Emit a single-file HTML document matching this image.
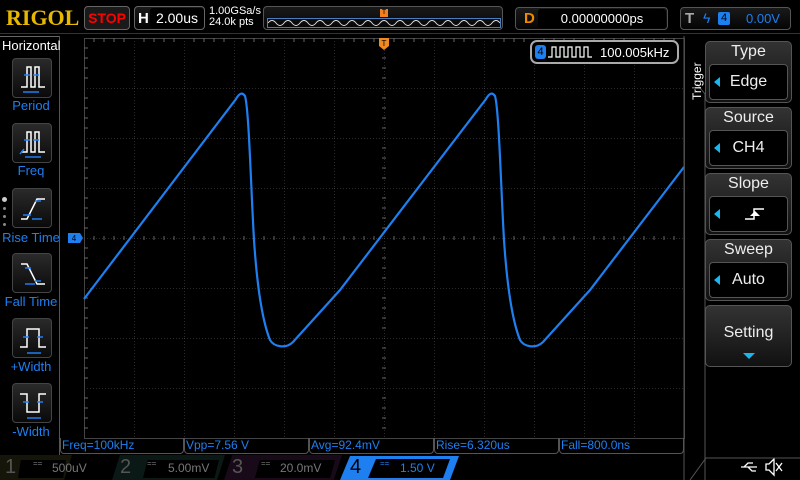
<!DOCTYPE html>
<html><head><meta charset="utf-8"><style>
*{margin:0;padding:0;box-sizing:border-box}
body{width:800px;height:480px;background:#000;overflow:hidden;position:relative;font-family:"Liberation Sans",sans-serif;color:#fff}
.a{position:absolute}
.box{position:absolute;border:1px solid #555;border-radius:4px;background:linear-gradient(#1a1a1a,#050505)}
.btn{position:absolute;left:12px;width:40px;height:40px;border:1px solid #444;border-radius:4px;background:linear-gradient(#2a2a2a,#0a0a0a)}
.lbl{position:absolute;left:0;width:62px;text-align:center;color:#1e7ff0;font-size:13px}
.rh{position:absolute;left:705px;width:87px;height:62px;border:1px solid #555;border-radius:5px;background:linear-gradient(#333,#111)}
.rh .t{text-align:center;font-size:16px;color:#eee;line-height:20px}
.rh .v{position:absolute;left:3px;right:3px;top:22px;height:36px;border:1px solid #555;border-radius:4px;background:#000;text-align:center;line-height:34px;font-size:16px;color:#eee}
.tri{position:absolute;left:4px;top:12px;width:0;height:0;border-top:5px solid transparent;border-bottom:5px solid transparent;border-right:6px solid #1ab6f0}
.m{position:absolute;top:438px;height:16px;border:1px solid #555;border-top:none;border-radius:0 0 4px 4px;color:#1e7ff0;font-size:12px;line-height:15px;padding-left:1px}
.ch{position:absolute;top:456px;height:24px;font-size:12px;line-height:24px}
</style></head><body>
<div class="a" style="left:6px;top:5px;font-family:'Liberation Serif',serif;font-weight:bold;font-size:22px;color:#e8b800">RIGOL</div>
<div class="box" style="left:84px;top:6px;width:46px;height:24px;border-color:#666;background:#1a1a1a;color:#f00;font-weight:bold;font-size:14px;text-align:center;line-height:22px">STOP</div>
<div class="box" style="left:134px;top:6px;width:71px;height:24px;border-color:#666"><span class="a" style="left:3px;top:3px;font-weight:bold;font-size:15px">H</span><div class="a" style="left:15px;top:1px;width:54px;height:20px;background:#000;border-radius:3px;text-align:center;font-size:14px;line-height:20px">2.00us</div></div>
<div class="a" style="left:209px;top:6px;font-size:11px;line-height:11px">1.00GSa/s<br>24.0k pts</div>
<div class="box" style="left:263px;top:6px;width:240px;height:24px"><div class="a" style="left:3px;top:11px;width:234px;height:10px;border:1px solid #4a7cc0"></div>
<svg class="a" style="left:4px;top:12px" width="232" height="8"><path d="M0,4 q4,-5 8,0 t8,0 t8,0 t8,0 t8,0 t8,0 t8,0 t8,0 t8,0 t8,0 t8,0 t8,0 t8,0 t8,0 t8,0 t8,0 t8,0 t8,0 t8,0 t8,0 t8,0 t8,0 t8,0 t8,0 t8,0 t8,0 t8,0 t8,0 t8,0" stroke="#ddd" fill="none"/></svg>
<div class="a" style="left:116px;top:2px;width:8px;height:8px;background:#f08020;font-size:7px;color:#000;text-align:center;line-height:8px">T</div></div>
<div class="box" style="left:515px;top:7px;width:153px;height:23px"><span class="a" style="left:8px;top:2px;color:#f08a00;font-weight:bold;font-size:15px">D</span><div class="a" style="left:22px;top:1px;width:128px;height:19px;background:#000;border-radius:3px;text-align:center;font-size:13px;line-height:19px">0.00000000ps</div></div>
<div class="box" style="left:680px;top:7px;width:111px;height:23px"><span class="a" style="left:4px;top:2px;color:#aaa;font-weight:bold;font-size:15px">T</span><span class="a" style="left:22px;top:2px;color:#1e7ff0;font-size:14px">ϟ</span><div class="a" style="left:37px;top:4px;width:12px;height:13px;background:#1e7ff0;border-radius:2px;color:#000;font-size:11px;text-align:center;line-height:13px">4</div><span class="a" style="left:65px;top:3px;color:#1e7ff0;font-size:13px">0.00V</span></div>
<div class="a" style="left:0;top:33px;width:800px;height:1px;background:#333"></div>
<div class="a" style="left:0;top:36px;width:60px;height:1px;background:#666"></div>
<div class="a" style="left:59px;top:36px;width:1px;height:444px;background:#555"></div>
<div class="a" style="left:2px;top:38px;font-size:13px">Horizontal</div>
<div class="btn" style="top:58px"><svg width="40" height="40"><path d="M8,28H14V8H18V28H22V8H26V28H32" stroke="#fff" fill="none" stroke-width="1.5"/><path d="M11,16h6M20,16h6M10,33h16" stroke="#1e7ff0" stroke-width="1.5"/></svg></div><div class="lbl" style="top:98px">Period</div>
<div class="btn" style="top:123px"><svg width="40" height="40"><path d="M8,28H14V8H18V28H22V8H26V28H32" stroke="#fff" fill="none" stroke-width="1.5"/><path d="M11,16h6M20,16h6M12,33h16M7,30l4,-5" stroke="#1e7ff0" stroke-width="1.5"/></svg></div><div class="lbl" style="top:163px">Freq</div>
<div class="btn" style="top:188px"><svg width="40" height="40"><path d="M8,30H14L24,10H32" stroke="#fff" fill="none" stroke-width="1.5"/><path d="M10,26h8M22,12h6M19,30h10" stroke="#1e7ff0" stroke-width="1.5"/></svg></div><div class="lbl" style="top:230px">Rise Time</div>
<div class="btn" style="top:253px"><svg width="40" height="40"><path d="M8,10H14L24,30H32" stroke="#fff" fill="none" stroke-width="1.5"/><path d="M12,14h6M22,27h6M12,30h10" stroke="#1e7ff0" stroke-width="1.5"/></svg></div><div class="lbl" style="top:294px">Fall Time</div>
<div class="btn" style="top:318px"><svg width="40" height="40"><path d="M7,28H14V10H26V28H33" stroke="#fff" fill="none" stroke-width="1.5"/><path d="M10,18h6M24,18h6M14,34h14" stroke="#1e7ff0" stroke-width="1.5"/></svg></div><div class="lbl" style="top:359px">+Width</div>
<div class="btn" style="top:383px"><svg width="40" height="40"><path d="M7,10H14V28H26V10H33" stroke="#fff" fill="none" stroke-width="1.5"/><path d="M10,18h6M24,18h6M14,34h14" stroke="#1e7ff0" stroke-width="1.5"/></svg></div><div class="lbl" style="top:424px">-Width</div>
<div class="a" style="left:2px;top:197px;width:5px;height:5px;border-radius:50%;background:#ccc"></div>
<div class="a" style="left:3px;top:207px;width:3px;height:3px;border-radius:50%;background:#888"></div>
<div class="a" style="left:3px;top:215px;width:3px;height:3px;border-radius:50%;background:#888"></div>
<div class="a" style="left:3px;top:223px;width:3px;height:3px;border-radius:50%;background:#888"></div>
<svg class="a" style="left:0;top:0" width="800" height="480">
<defs><pattern id="g" width="50" height="50" patternUnits="userSpaceOnUse" x="84" y="38"><path d="M0,0V50M0,0H50" stroke="#555" stroke-dasharray="1,2" fill="none"/></pattern></defs>
<rect x="84" y="38" width="600" height="400" fill="url(#g)"/>
<rect x="84.5" y="38.5" width="600" height="400" fill="none" stroke="#444"/>
<g stroke="#666">
<path d="M94,38v4M104,38v4M114,38v4M124,38v4M144,38v4M154,38v4M164,38v4M174,38v4M194,38v4M204,38v4M214,38v4M224,38v4M244,38v4M254,38v4M264,38v4M274,38v4M294,38v4M304,38v4M314,38v4M324,38v4M344,38v4M354,38v4M364,38v4M374,38v4M394,38v4M404,38v4M414,38v4M424,38v4M444,38v4M454,38v4M464,38v4M474,38v4M494,38v4M504,38v4M514,38v4M524,38v4M544,38v4M554,38v4M564,38v4M574,38v4M594,38v4M604,38v4M614,38v4M624,38v4M644,38v4M654,38v4M664,38v4M674,38v4"/>
<path d="M84,48h4M84,58h4M84,68h4M84,78h4M84,98h4M84,108h4M84,118h4M84,128h4M84,148h4M84,158h4M84,168h4M84,178h4M84,198h4M84,208h4M84,218h4M84,228h4M84,248h4M84,258h4M84,268h4M84,278h4M84,298h4M84,308h4M84,318h4M84,328h4M84,348h4M84,358h4M84,368h4M84,378h4M84,398h4M84,408h4M84,418h4M84,428h4"/>
<path d="M94,236v4M104,236v4M114,236v4M124,236v4M144,236v4M154,236v4M164,236v4M174,236v4M194,236v4M204,236v4M214,236v4M224,236v4M244,236v4M254,236v4M264,236v4M274,236v4M294,236v4M304,236v4M314,236v4M324,236v4M344,236v4M354,236v4M364,236v4M374,236v4M394,236v4M404,236v4M414,236v4M424,236v4M444,236v4M454,236v4M464,236v4M474,236v4M494,236v4M504,236v4M514,236v4M524,236v4M544,236v4M554,236v4M564,236v4M574,236v4M594,236v4M604,236v4M614,236v4M624,236v4M644,236v4M654,236v4M664,236v4M674,236v4"/>
<path d="M382,48h4M382,58h4M382,68h4M382,78h4M382,98h4M382,108h4M382,118h4M382,128h4M382,148h4M382,158h4M382,168h4M382,178h4M382,198h4M382,208h4M382,218h4M382,228h4M382,248h4M382,258h4M382,268h4M382,278h4M382,298h4M382,308h4M382,318h4M382,328h4M382,348h4M382,358h4M382,368h4M382,378h4M382,398h4M382,408h4M382,418h4M382,428h4"/>
</g>
<path d="M84,299 L236,99 Q241,90 245,96 C249,110 251,190 254,240 C257,285 262,320 270,340 C274,347 286,349 293,342 L340,290 L486,99 Q491,90 495,96 C499,110 501,190 504,240 C507,285 512,320 520,340 C524,347 536,349 543,342 L590,290 L684,167" stroke="#1e7ff0" stroke-width="2.2" fill="none"/>
<path d="M379,38h10v8l-5,4l-5,-4z" fill="#f08a20"/>
<text x="384" y="46" font-size="8" text-anchor="middle" fill="#000" font-family="Liberation Sans">T</text>
<path d="M68,233h12l3,5l-3,5h-12z" fill="#1e7ff0"/>
<text x="74" y="241" font-size="8" text-anchor="middle" fill="#000" font-family="Liberation Sans">4</text>
<path d="M684,36V480M697,84l8,10V480" stroke="#555" fill="none"/>
<g stroke="#fff" fill="none" stroke-width="1.3">
<path d="M741,467h16M744,467l4,-4h5M748,467l4,4h4"/>
<path d="M766,464h3l5,-5v16l-5,-5h-3z"/>
<path d="M776,463l6,8M782,463l-6,8"/>
</g>
</svg>
<div class="a" style="left:530px;top:40px;width:149px;height:24px;border:2px solid #aaa;border-radius:7px;background:#000"></div>
<div class="a" style="left:535px;top:45px;width:11px;height:14px;background:#1e7ff0;border-radius:3px;color:#000;font-size:11px;text-align:center;line-height:14px">4</div>
<svg class="a" style="left:548px;top:45px" width="46" height="14"><path d="M0,12H4V2H8V12H12V2H16V12H20V2H24V12H28V2H32V12H36V2H40V12H44" stroke="#fff" fill="none" stroke-width="1.2"/></svg>
<div class="a" style="left:600px;top:45px;font-size:13px">100.005kHz</div>
<div class="a" style="left:690px;top:62px;transform:rotate(-90deg);transform-origin:left top;font-size:12px;width:0;height:0"><span style="position:absolute;left:-38px;top:0">Trigger</span></div>
<div class="rh" style="top:41px"><div class="t">Type</div><div class="v"><div class="tri"></div>Edge</div></div>
<div class="rh" style="top:107px"><div class="t">Source</div><div class="v"><div class="tri"></div>CH4</div></div>
<div class="rh" style="top:173px"><div class="t">Slope</div><div class="v"><div class="tri"></div><svg style="position:absolute;left:34px;top:10px" width="22" height="14"><path d="M1,12H10V2H20" stroke="#fff" fill="none" stroke-width="1.5"/><path d="M6,9l5,-5l5,5z" fill="#fff"/></svg></div></div>
<div class="rh" style="top:239px"><div class="t">Sweep</div><div class="v"><div class="tri"></div>Auto</div></div>
<div class="rh" style="top:305px;height:62px"><div class="t" style="margin-top:17px">Setting</div><div class="a" style="left:37px;top:47px;border-left:6px solid transparent;border-right:6px solid transparent;border-top:6px solid #1ab6f0"></div></div>
<div class="m" style="left:60px;width:124px">Freq=100kHz</div>
<div class="m" style="left:184px;width:125px">Vpp=7.56 V</div>
<div class="m" style="left:309px;width:125px">Avg=92.4mV</div>
<div class="m" style="left:434px;width:125px">Rise=6.320us</div>
<div class="m" style="left:559px;width:125px">Fall=800.0ns</div>
<svg class="a" style="left:0;top:455px" width="800" height="25">
<path d="M350,1H459L450,25H340z" fill="#1e7ff0"/><path d="M376,4H450L443,23H368z" fill="#000"/>
<path d="M690,25L706,3H800" stroke="#555" fill="none"/>
</svg>
<div class="a" style="left:0;top:455px;width:72px;height:25px;background:#15150a;clip-path:polygon(0 0,100% 0,89% 100%,0 100%)"></div>
<div class="a" style="left:18px;top:460px;width:48px;height:18px;background:#000;clip-path:polygon(6% 0,100% 0,94% 100%,0 100%)"></div>
<div class="ch" style="left:5px;top:455px;font-size:20px;color:#555">1</div>
<div class="ch" style="left:33px;color:#777;font-size:8px;top:452px">==</div>
<div class="ch" style="left:52px;color:#777;top:456px">500uV</div>
<div class="a" style="left:112px;top:455px;width:113px;height:25px;background:#0a1816;clip-path:polygon(7% 0,100% 0,93% 100%,0 100%)"></div>
<div class="a" style="left:143px;top:460px;width:76px;height:18px;background:#000;clip-path:polygon(6% 0,100% 0,94% 100%,0 100%)"></div>
<div class="ch" style="left:120px;top:455px;font-size:20px;color:#555">2</div>
<div class="ch" style="left:147px;color:#777;font-size:8px;top:452px">==</div>
<div class="ch" style="left:168px;color:#777;top:456px">5.00mV</div>
<div class="a" style="left:224px;top:455px;width:118px;height:25px;background:#180a18;clip-path:polygon(7% 0,100% 0,93% 100%,0 100%)"></div>
<div class="a" style="left:255px;top:460px;width:80px;height:18px;background:#000;clip-path:polygon(6% 0,100% 0,94% 100%,0 100%)"></div>
<div class="ch" style="left:232px;top:455px;font-size:20px;color:#555">3</div>
<div class="ch" style="left:261px;color:#777;font-size:8px;top:452px">==</div>
<div class="ch" style="left:280px;color:#777;top:456px">20.0mV</div>
<div class="ch" style="left:350px;top:455px;font-size:20px;color:#000">4</div>
<div class="ch" style="left:380px;color:#1e7ff0;font-size:8px;top:452px">==</div>
<div class="ch" style="left:400px;color:#1e7ff0;top:456px">1.50 V</div>
</body></html>
